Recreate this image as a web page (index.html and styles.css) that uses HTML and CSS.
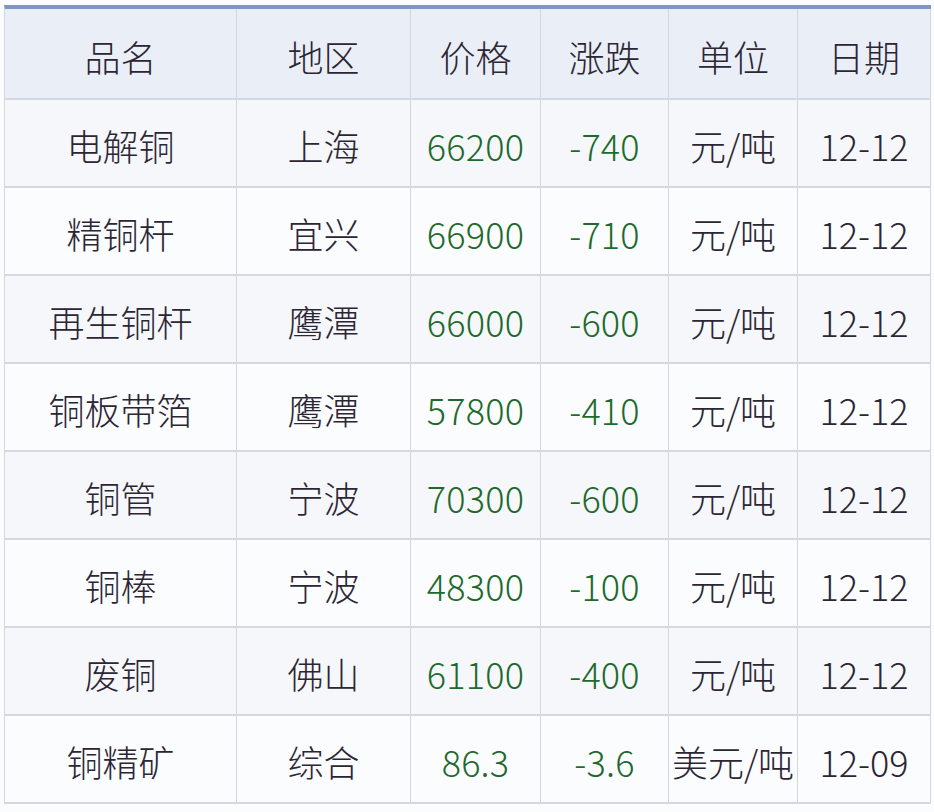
FILE: index.html
```html
<!DOCTYPE html>
<html lang="zh">
<head>
<meta charset="utf-8">
<link rel="stylesheet" href="styles.css">
</head>
<body>
<table class="price-table">
  <colgroup>
    <col class="c1"><col class="c2"><col class="c3"><col class="c4"><col class="c5"><col class="c6">
  </colgroup>
  <thead>
    <tr><th>品名</th><th>地区</th><th>价格</th><th>涨跌</th><th>单位</th><th>日期</th></tr>
  </thead>
  <tbody>
    <tr><td>电解铜</td><td>上海</td><td class="num">66200</td><td class="num">-740</td><td>元/吨</td><td>12-12</td></tr>
    <tr><td>精铜杆</td><td>宜兴</td><td class="num">66900</td><td class="num">-710</td><td>元/吨</td><td>12-12</td></tr>
    <tr><td>再生铜杆</td><td>鹰潭</td><td class="num">66000</td><td class="num">-600</td><td>元/吨</td><td>12-12</td></tr>
    <tr><td>铜板带箔</td><td>鹰潭</td><td class="num">57800</td><td class="num">-410</td><td>元/吨</td><td>12-12</td></tr>
    <tr><td>铜管</td><td>宁波</td><td class="num">70300</td><td class="num">-600</td><td>元/吨</td><td>12-12</td></tr>
    <tr><td>铜棒</td><td>宁波</td><td class="num">48300</td><td class="num">-100</td><td>元/吨</td><td>12-12</td></tr>
    <tr><td>废铜</td><td>佛山</td><td class="num">61100</td><td class="num">-400</td><td>元/吨</td><td>12-12</td></tr>
    <tr><td>铜精矿</td><td>综合</td><td class="num">86.3</td><td class="num">-3.6</td><td>美元/吨</td><td>12-09</td></tr>
  </tbody>
</table>
</body>
</html>
```

FILE: styles.css
```css
html, body {
  margin: 0;
  padding: 0;
  background: #fbfcfe;
}

body {
  padding: 5px 0 0 4px;
  font-family: "Noto Sans CJK SC", "Noto Sans", sans-serif;
  color: #2c2634;
}

.price-table {
  border-collapse: separate;
  border-spacing: 0;
  table-layout: fixed;
  width: 926px;
  border-top: 4px solid #8096c2;
  border-left: 1px solid #d2d6de;
}

.c1 { width: 232px; }
.c2 { width: 174px; }
.c3 { width: 130px; }
.c4 { width: 128px; }
.c5 { width: 129px; }
.c6 { width: 133px; }

.price-table th,
.price-table td {
  padding: 0;
  text-align: center;
  vertical-align: middle;
  font-size: 36px;
  font-weight: 300;
  line-height: 1;
  border-right: 1px solid #d2d6de;
  border-bottom: 2px solid #d4d8e0;
  white-space: nowrap;
  box-sizing: border-box;
}

.price-table th {
  height: 91px;
  background: #e9eef7;
  padding-top: 4px;
}

.price-table td {
  height: 88px;
  padding-top: 4px;
}

.price-table tbody tr:nth-child(odd) td { background: #f6f7fa; }
.price-table tbody tr:nth-child(even) td { background: #fbfcfe; }

.price-table td.num {
  color: #1e6a2c;
  letter-spacing: 0.2px;
}
```
